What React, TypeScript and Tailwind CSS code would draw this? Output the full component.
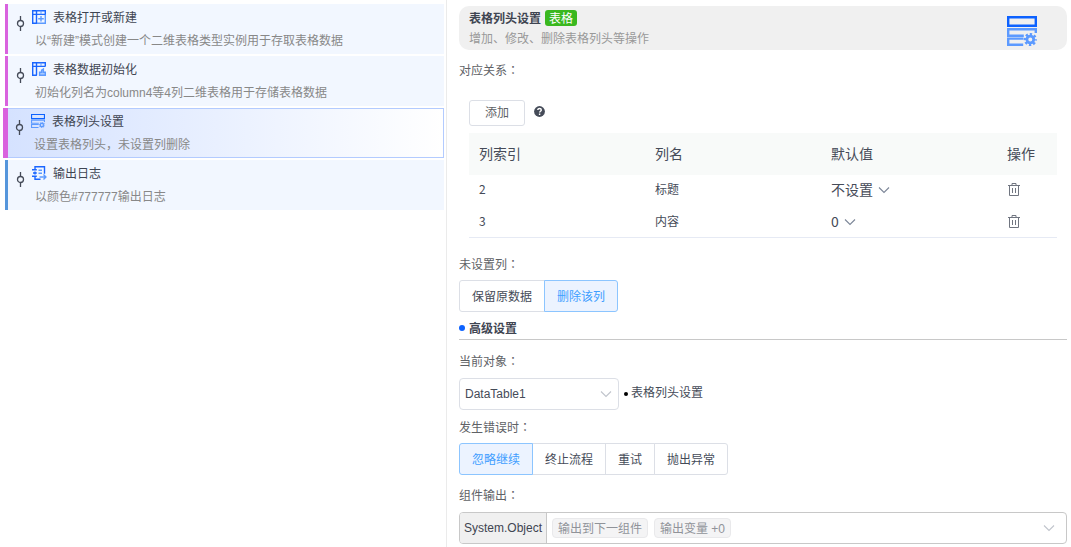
import type { ReactNode } from "react";

type Step = {
  title: string;
  desc: string;
  icon: ReactNode;
  bar: string;
  active?: boolean;
};

function TableIcon({ children }: { children?: ReactNode }) {
  return (
    <svg width="14" height="14" viewBox="0 0 14 14" fill="none" stroke="#1a66ff" strokeWidth="1.4">
      {children}
      <path d="M13.3 4.4V.7H.7v12.6h4.2M.7 4.4h12.6M4.5.7v12.6" />
      <path d="M9 .7v3.5" strokeWidth="1" stroke="#5c9aff" />
    </svg>
  );
}

function NewTableIcon() {
  return (
    <TableIcon>
      <path d="M13.3 4.2v9.1H4.4M9 6v5.6M6.2 8.8h5.6" stroke="#5c9aff" />
    </TableIcon>
  );
}

function InitTableIcon() {
  return (
    <TableIcon>
      <path d="M7.6 13.3v-3h2V8.2L11.4 7v3.2h1.9v3.1z" stroke="#5c9aff" fill="#a8caff" />
    </TableIcon>
  );
}

function HeaderIcon({ size }: { size: number }) {
  return (
    <svg width={size} height={size} viewBox="0 0 30 30" fill="none" strokeWidth="2.4">
      <path d="M1.2 1.2h27.6v8.6H1.2z" stroke="#0d62ff" />
      <path
        d="M28.8 17v-3.8H1.2v6.6h15.6M16 22.6H1.2v6.2h15M12.5 22.6h4"
        stroke="#5c9aff"
      />
      <circle cx="23.3" cy="23.5" r="3.4" stroke="#5c9aff" strokeWidth="2.8" />
      <circle cx="23.3" cy="23.5" r="5.4" stroke="#5c9aff" strokeWidth="2.4" strokeDasharray="2.3 1.94" strokeDashoffset="1.15" />
    </svg>
  );
}

function LogIcon() {
  return (
    <svg width="15" height="14" viewBox="0 0 15 14" fill="none" stroke="#1a66ff" strokeWidth="1.4">
      <path d="M3 3V.7h9.5v7M3 5.5v3M3 11v2.3h5.5M0 3.8h4.8M1 7h3.8M0 10.2h4.8" />
      <path d="M6.5 4.2H10M6.5 7.2H10" stroke="#5c9aff" />
      <path d="M7.5 11h6.3M11.5 8.6l2.4 2.4-2.4 2.4" stroke="#5c9aff" />
    </svg>
  );
}

function NodeMark() {
  return (
    <svg width="9" height="15" viewBox="0 0 9 15" fill="none" stroke="#454b58" strokeWidth="1.3">
      <path d="M4.5 0v4.5M4.5 10.5V15" />
      <circle cx="4.5" cy="7.5" r="3" />
    </svg>
  );
}

function Chevron({ className }: { className: string }) {
  return (
    <svg
      className={className}
      width="12"
      height="8"
      viewBox="0 0 12 8"
      fill="none"
      stroke="currentColor"
      strokeWidth="1.1"
    >
      <path d="M1 1.5l5 5 5-5" />
    </svg>
  );
}

function HelpIcon() {
  return (
    <svg className="mt-1.5" width="11" height="11" viewBox="0 0 11 11" fill="none">
      <circle cx="5.5" cy="5.5" r="5.4" fill="#454b58" />
      <path d="M3.8 4.1c0-2.2 3.5-2.1 3.5 0 0 1.2-1.7 1.2-1.7 2.5M5.6 7.4v1.5" stroke="#fff" strokeWidth="1.4" />
    </svg>
  );
}

function TrashIcon() {
  return (
    <svg className="mb-px ml-px" width="12" height="13" viewBox="0 0 12 13" fill="none" stroke="#707580">
      <path d="M0 2.5h12M4 2V.5h4V2M1.5 2.5v10h9v-10M4.5 5v5M7.5 5v5" />
    </svg>
  );
}

const steps: Step[] = [
  {
    title: "表格打开或新建",
    desc: "以“新建”模式创建一个二维表格类型实例用于存取表格数据",
    icon: <NewTableIcon />,
    bar: "border-[#d962de]",
  },
  {
    title: "表格数据初始化",
    desc: "初始化列名为column4等4列二维表格用于存储表格数据",
    icon: <InitTableIcon />,
    bar: "border-[#d962de]",
  },
  {
    title: "表格列头设置",
    desc: "设置表格列头，未设置列删除",
    icon: <HeaderIcon size={14} />,
    bar: "bg-[#d962de]",
    active: true,
  },
  {
    title: "输出日志",
    desc: "以颜色#777777输出日志",
    icon: <LogIcon />,
    bar: "border-[#5596dc]",
  },
];

const rows = [
  { index: "2", name: "标题", value: "不设置" },
  { index: "3", name: "内容", value: "0" },
];

function StepCard({ step }: { step: Step }) {
  const body = (
    <>
      <div className="flex h-[26px] items-center">
        <span className="mt-2.5 w-4 shrink-0">
          <NodeMark />
        </span>
        <span className="mb-0.5 flex w-[21px] shrink-0">{step.icon}</span>
        <span className="text-[#3f4552]">{step.title}</span>
      </div>
      <p className="ml-[19px] leading-[20px] text-[#888]">{step.desc}</p>
    </>
  );
  if (step.active) {
    return (
      <div className="-ml-0.5 flex h-[50px]">
        <div className={`w-[5px] ${step.bar}`} />
        <div className="flex-1 border border-l-0 border-[#b3cbff] bg-linear-to-r from-[#d5e2ff] to-white pl-[7px]">
          {body}
        </div>
      </div>
    );
  }
  return <div className={`h-[50px] border-l-3 bg-[#f2f7ff] pt-px pl-2 ${step.bar}`}>{body}</div>;
}

function Label({ children }: { children: ReactNode }) {
  return (
    <div className="h-5 leading-[18px] text-[#606266]">
      {children}
      <span className="font-['Noto_Sans_CJK_TC',sans-serif]">：</span>
    </div>
  );
}

function Tag({ children }: { children: ReactNode }) {
  return (
    <span className="flex h-5 items-center rounded-[4px] border border-[#e9e9eb] bg-[#f4f4f5] px-[5px] pt-0.5 text-[#909399]">
      {children}
    </span>
  );
}

function ButtonGroup({ items, active }: { items: string[]; active: number }) {
  return (
    <div className="flex h-8">
      {items.map((item, i) => (
        <button
          key={item}
          className={`-ml-px border px-3 pt-0.5 first:ml-0 first:rounded-l-[3px] last:rounded-r-[3px] ${
            i === active
              ? "relative z-10 border-[#8cc5ff] bg-[#ecf3ff] text-[#409eff]"
              : "border-[#dcdfe6] bg-white text-[#454b58]"
          }`}
        >
          {item}
        </button>
      ))}
    </div>
  );
}

export default function App() {
  return (
    <div className="flex h-[547px] w-[1071px] overflow-hidden bg-white font-['Liberation_Sans','Noto_Sans_CJK_SC',sans-serif] text-[12px] whitespace-nowrap">
      <aside className="flex w-[447px] shrink-0 flex-col gap-0.5 border-r border-[#ebebeb] pt-1 pr-0.5 pl-[5px]">
        {steps.map((step) => (
          <StepCard key={step.title} step={step} />
        ))}
      </aside>

      <main className="w-[620px] pt-1.5 pl-3">
        <header className="flex h-11 items-center justify-between rounded-[10px] bg-[#f0f0f0] pr-[30px] pl-2.5">
          <div className="pt-0.5">
            <div className="flex h-5 items-center gap-1">
              <span className="font-bold text-[#3f4552]">表格列头设置</span>
              <span className="mb-0.5 h-4 rounded-[3px] bg-[#3ab81f] px-1 leading-[18px] text-white">
                表格
              </span>
            </div>
            <div className="h-5 leading-5 text-[#999]">增加、修改、删除表格列头等操作</div>
          </div>
          <div className="mt-1.5">
            <HeaderIcon size={30} />
          </div>
        </header>

        <div className="mt-[11px]">
          <Label>对应关系</Label>
        </div>

        <section className="mt-[19px] px-2.5">
          <div className="flex items-start gap-[9px]">
            <button className="h-[26px] w-14 rounded-[3px] border border-[#dcdfe6] text-[#606266]">
              添加
            </button>
            <HelpIcon />
          </div>
          <div className="mt-[7px] border-b border-[#e6eaf4] pb-px text-[#454b58]">
            <div className="mb-px grid h-[42px] grid-cols-[176px_176px_176px_1fr] items-center bg-[#f8faf9] pt-px pl-2.5 text-[14px]">
              <span>列索引</span>
              <span>列名</span>
              <span>默认值</span>
              <span>操作</span>
            </div>
            <div className="flex flex-col gap-1">
              {rows.map((row) => (
                <div
                  key={row.index}
                  className="grid h-7 grid-cols-[176px_176px_176px_1fr] items-center pl-2.5"
                >
                  <span className="mb-0.5 font-['Noto_Sans_CJK_SC',sans-serif]">{row.index}</span>
                  <span>{row.name}</span>
                  <span className="mb-px flex items-center gap-[5px] font-['Noto_Sans_CJK_SC',sans-serif] text-[14px]">
                    {row.value}
                    <Chevron className="text-[#7c8698]" />
                  </span>
                  <TrashIcon />
                </div>
              ))}
            </div>
          </div>
        </section>

        <div className="mt-[17px] mb-[5px]">
          <Label>未设置列</Label>
        </div>
        <ButtonGroup items={["保留原数据", "删除该列"]} active={1} />

        <div className="mt-1.5 flex h-[22px] items-center gap-1 border-b border-[#c8c8c8] font-bold text-[#3f4552]">
          <span className="mb-0.5 size-1.5 rounded-full bg-[#0d62ff]" />
          高级设置
        </div>

        <div className="mt-3 mb-[6px]">
          <Label>当前对象</Label>
        </div>
        <div className="flex">
          <div className="flex h-8 w-40 items-center justify-between rounded-[4px] border border-[#dcdfe6] pr-1.5 pl-[5px] text-[#454b58]">
            DataTable1
            <Chevron className="text-[#c0c4cc]" />
          </div>
          <div className="ml-[5px] flex h-[30px] items-center gap-[3px] text-[#454b58]">
            <span className="mt-0.5 size-1 rounded-full bg-black" />
            表格列头设置
          </div>
        </div>

        <div className="mt-2 mb-[5px]">
          <Label>发生错误时</Label>
        </div>
        <ButtonGroup items={["忽略继续", "终止流程", "重试", "抛出异常"]} active={0} />

        <div className="mt-[11px] mb-[6px]">
          <Label>组件输出</Label>
        </div>
        <div className="flex h-8 rounded-[4px] border border-[#c8c8c8]">
          <div className="flex w-[87px] items-center justify-center rounded-l-[3px] border-r border-[#c8c8c8] bg-[#f0f0f0] text-[#3f4552]">
            System.Object
          </div>
          <div className="flex flex-1 items-center gap-1.5 pr-[11px] pl-[5px]">
            <Tag>输出到下一组件</Tag>
            <Tag>输出变量 +0</Tag>
            <Chevron className="ml-auto text-[#c0c4cc]" />
          </div>
        </div>
      </main>
    </div>
  );
}
